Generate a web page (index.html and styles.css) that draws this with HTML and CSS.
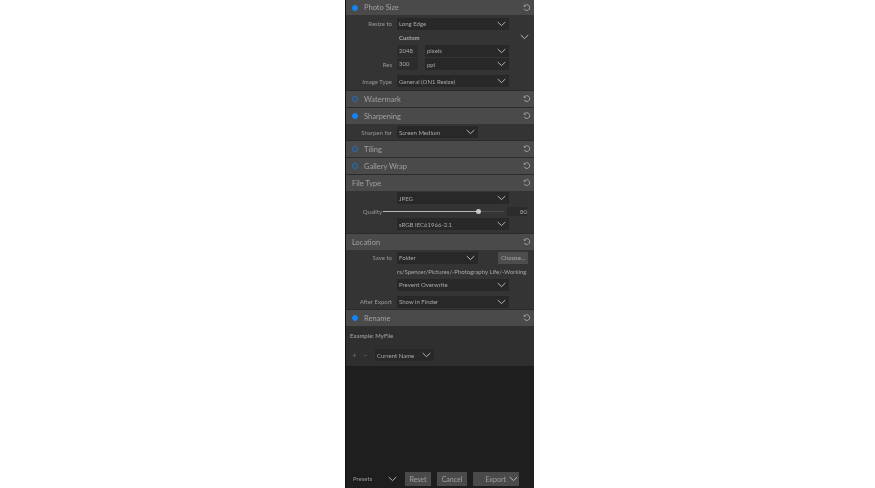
FILE: index.html
```html
<!DOCTYPE html>
<html lang="en">
<head>
    <meta charset="UTF-8">
    <title>Export</title>
    <link rel="stylesheet" href="styles.css">
</head>
<body>
    <svg class="defs" width="0" height="0">
        <symbol id="reset" viewBox="0 0 10 10">
            <path d="M2 2.2 A3.6 3.6 0 1 1 1.5 6" fill="none" stroke="currentColor" stroke-width="1.1"/>
            <path d="M1 .6 L1 3.4 L3.8 3.4 Z" fill="currentColor"/>
        </symbol>
        <symbol id="chev" viewBox="0 0 10 6">
            <path d="M.8 .8 L5 4.8 L9.2 .8" fill="none" stroke="currentColor" stroke-width="1"/>
        </symbol>
    </svg>

    <div class="panel">
        <div class="head first">
            <span class="dot on"></span><span class="title">Photo Size</span>
            <svg class="reset"><use href="#reset"/></svg>
        </div>
        <div class="body photo-size">
            <div class="row">
                <span class="label">Resize to</span>
                <div class="select w112">Long Edge <svg class="chev"><use href="#chev"/></svg></div>
            </div>
            <div class="row custom">
                <span class="label"></span>
                <span class="bold">Custom</span>
                <svg class="chev"><use href="#chev"/></svg>
            </div>
            <div class="row">
                <span class="label"></span>
                <div class="field">2048</div>
                <div class="select w84">pixels <svg class="chev"><use href="#chev"/></svg></div>
            </div>
            <div class="row">
                <span class="label">Res</span>
                <div class="field">300</div>
                <div class="select w84">ppi <svg class="chev"><use href="#chev"/></svg></div>
            </div>
            <div class="row gap-top">
                <span class="label">Image Type</span>
                <div class="select w112">General (ON1 Resize) <svg class="chev"><use href="#chev"/></svg></div>
            </div>
        </div>

        <div class="head">
            <span class="dot"></span><span class="title">Watermark</span>
            <svg class="reset"><use href="#reset"/></svg>
        </div>
        <div class="head">
            <span class="dot on"></span><span class="title">Sharpening</span>
            <svg class="reset"><use href="#reset"/></svg>
        </div>
        <div class="body sharpen">
            <div class="row">
                <span class="label">Sharpen for</span>
                <div class="select w81">Screen Medium <svg class="chev"><use href="#chev"/></svg></div>
            </div>
        </div>
        <div class="head">
            <span class="dot"></span><span class="title">Tiling</span>
            <svg class="reset"><use href="#reset"/></svg>
        </div>
        <div class="head">
            <span class="dot"></span><span class="title">Gallery Wrap</span>
            <svg class="reset"><use href="#reset"/></svg>
        </div>
        <div class="head">
            <span class="title plain">File Type</span>
            <svg class="reset"><use href="#reset"/></svg>
        </div>
        <div class="body file-type">
            <div class="row">
                <span class="label"></span>
                <div class="select w112">JPEG <svg class="chev"><use href="#chev"/></svg></div>
            </div>
            <div class="row quality">
                <span class="label short">Quality</span>
                <div class="slider"><span class="fill"></span><span class="knob"></span></div>
                <div class="value">80</div>
            </div>
            <div class="row">
                <span class="label"></span>
                <div class="select w112">sRGB IEC61966-2.1 <svg class="chev"><use href="#chev"/></svg></div>
            </div>
        </div>

        <div class="head">
            <span class="title plain">Location</span>
            <svg class="reset"><use href="#reset"/></svg>
        </div>
        <div class="body location">
            <div class="row">
                <span class="label">Save to</span>
                <div class="select w81">Folder <svg class="chev"><use href="#chev"/></svg></div>
                <button class="choose">Choose...</button>
            </div>
            <div class="row">
                <span class="label"></span>
                <div class="path">rs/Spencer/Pictures/-Photography Life/-Working</div>
            </div>
            <div class="row">
                <span class="label"></span>
                <div class="select w112">Prevent Overwrite <svg class="chev"><use href="#chev"/></svg></div>
            </div>
            <div class="row gap-top">
                <span class="label">After Export</span>
                <div class="select w112">Show in Finder <svg class="chev"><use href="#chev"/></svg></div>
            </div>
        </div>

        <div class="head">
            <span class="dot on"></span><span class="title">Rename</span>
            <svg class="reset"><use href="#reset"/></svg>
        </div>
        <div class="body rename">
            <div class="example">Example: MyFile</div>
            <div class="tokens">
                <span class="pm">+</span><span class="pm">&minus;</span>
                <div class="select w59">Current Name <svg class="chev"><use href="#chev"/></svg></div>
            </div>
        </div>

        <div class="footer">
            <span class="presets">Presets</span>
            <svg class="chev big"><use href="#chev"/></svg>
            <button class="btn reset-btn">Reset</button>
            <button class="btn cancel-btn">Cancel</button>
            <button class="btn export-btn">Export <svg class="chev"><use href="#chev"/></svg></button>
        </div>
    </div>
</body>
</html>
```

FILE: styles.css
```css
body {
    margin: 0;
    background: #fff;
    height: 488px;
    overflow: hidden;
    font-family: Lato, "Open Sans", sans-serif;
}

.defs {
    position: absolute;
}

.panel {
    width: 188px;
    height: 488px;
    margin-left: 345px;
    background: #1e1e1e;
    border-left: 1px solid #111;
    display: flex;
    flex-direction: column;
    color: #a8a8a8;
    font-size: 6px;
    filter: blur(0.3px);
}

/* section headers */
.head {
    height: 16px;
    flex: none;
    background: #4a4a4a;
    border-top: 1px solid #2b2b2b;
    display: flex;
    align-items: center;
    padding: 0 3px 0 6px;
}

.head.first {
    height: 15px;
    border-top: none;
}

.title {
    font-size: 7.5px;
    color: #a0a0a0;
    margin-left: 6px;
}

.title.plain {
    margin-left: 0;
}

.dot {
    width: 4px;
    height: 4px;
    border: 1px solid #1b6fc9;
    border-radius: 50%;
    flex: none;
}

.dot.on {
    background: #1583f2;
    border-color: #1583f2;
}

.reset {
    width: 8px;
    height: 8px;
    margin-left: auto;
    color: #a8a8a8;
}

/* section bodies */
.body {
    background: #343434;
    flex: none;
    display: flex;
    flex-direction: column;
}

.photo-size {
    height: 75px;
    padding-top: 2px;
    box-sizing: border-box;
}

.sharpen {
    height: 16px;
    justify-content: center;
}

.file-type {
    height: 42px;
    padding-top: 0.5px;
    box-sizing: border-box;
}

.file-type .row {
    height: 13px;
}

.location {
    height: 59px;
    padding-top: 1px;
    box-sizing: border-box;
}

.rename {
    height: 40px;
    background: #2f2f2f;
}

.row {
    display: flex;
    align-items: center;
    height: 13.5px;
}

.row.gap-top {
    margin-top: 3.5px;
}

.label {
    width: 46px;
    flex: none;
    text-align: right;
    margin-right: 5px;
    color: #989898;
}

.select {
    height: 12px;
    background: #282828;
    display: flex;
    align-items: center;
    justify-content: space-between;
    padding: 0 3px 0 2px;
    box-sizing: border-box;
}

.w112 { width: 112px; }
.w84 { width: 84px; }
.w81 { width: 81px; }
.w59 { width: 59px; }

.chev {
    width: 9px;
    height: 6px;
    color: #c4c4c4;
    flex: none;
}

.custom .bold {
    font-weight: 700;
    margin-left: 2px;
}

.custom .chev {
    margin-left: auto;
    margin-right: 5px;
}

.field {
    width: 21px;
    height: 12px;
    margin-right: 7px;
    padding-left: 2px;
    box-sizing: border-box;
    background: #2c2c2c;
    line-height: 12px;
}

.label.short {
    width: 36px;
    margin-right: 1px;
}

.slider {
    width: 121px;
    height: 1px;
    background: #4c4c4c;
    position: relative;
}

.fill {
    display: block;
    width: 95px;
    height: 1px;
    background: #b8b8b8;
}

.knob {
    position: absolute;
    left: 93px;
    top: -2px;
    width: 5px;
    height: 5px;
    border-radius: 50%;
    background: #c8c8c8;
}

.value {
    width: 20px;
    height: 9px;
    margin-left: 3px;
    background: #2c2c2c;
    text-align: right;
    line-height: 9px;
}

.choose {
    width: 30px;
    height: 12px;
    margin-left: auto;
    margin-right: 6px;
    padding: 0;
    border: none;
    background: #4d4d4d;
    color: #a8a8a8;
    font: inherit;
}

.path {
    width: 131px;
    padding-left: 0;
    white-space: nowrap;
    overflow: hidden;
}

.example {
    margin: 5px 0 0 4px;
    height: 10px;
    line-height: 10px;
}

.tokens {
    display: flex;
    align-items: center;
    margin-top: 8px;
    padding-left: 6px;
}

.pm {
    width: 11px;
    font-size: 8px;
    color: #707070;
}

.tokens .select {
    margin-left: 1px;
}

/* bottom bar */
.footer {
    margin-top: auto;
    height: 15px;
    margin-bottom: 2px;
    display: flex;
    align-items: center;
    padding-left: 7px;
    color: #989898;
}

.presets {
    width: 34px;
}

.chev.big {
    margin-left: 1px;
}

.btn {
    height: 14px;
    border: none;
    padding: 0;
    background: #4a4a4a;
    color: #a0a0a0;
    font: inherit;
    font-size: 7px;
}

.reset-btn {
    width: 26px;
    margin-left: 8px;
}

.cancel-btn {
    width: 30px;
    margin-left: 6px;
}

.export-btn {
    width: 46px;
    margin-left: 6px;
    display: flex;
    align-items: center;
    justify-content: flex-end;
    gap: 3px;
    padding-right: 1px;
    box-sizing: border-box;
}
```
